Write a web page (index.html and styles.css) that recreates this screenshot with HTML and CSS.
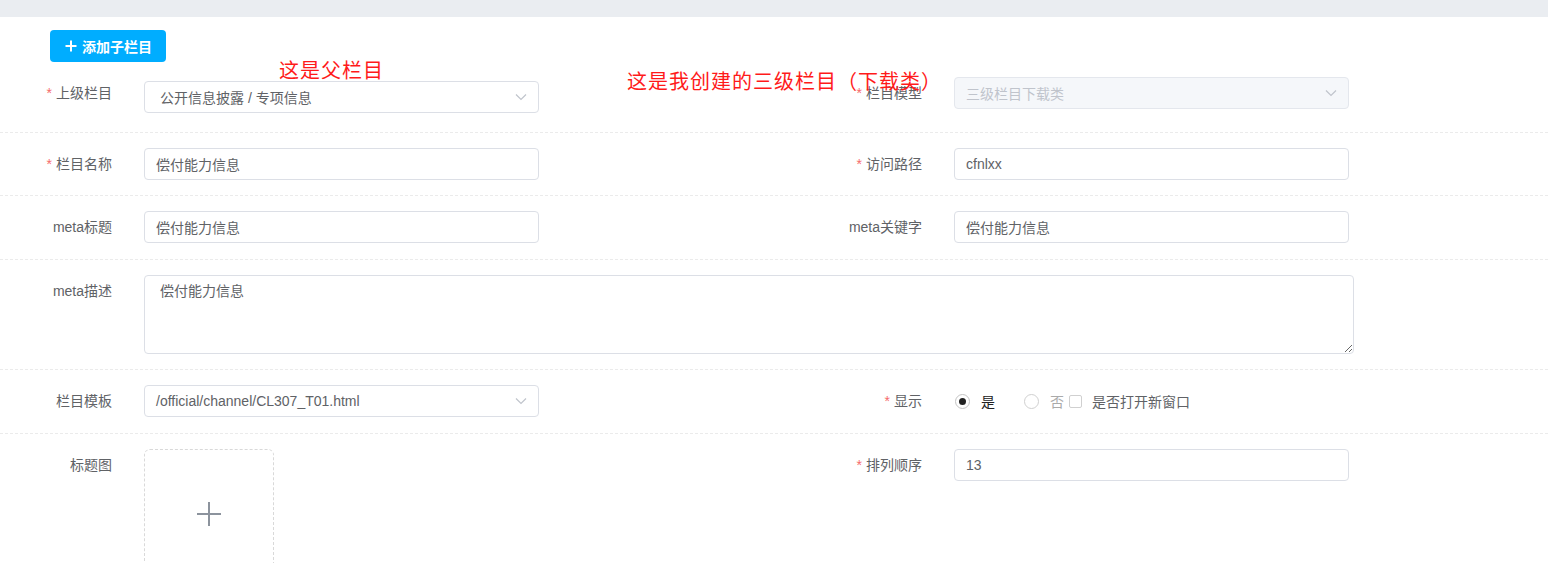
FILE: index.html
```html
<!DOCTYPE html>
<html lang="zh-CN">
<head>
<meta charset="utf-8">
<title>栏目编辑</title>
<link rel="stylesheet" href="styles.css">
</head>
<body>
<div class="topbar"></div>
<div class="page">
  <div class="toolbar">
    <button class="btn-primary" type="button">
      <svg class="btn-icon" width="12" height="12" viewBox="0 0 12 12"><path d="M6 0.5V11.5M0.5 6H11.5" stroke="#fff" stroke-width="2" fill="none"/></svg>
      <span>添加子栏目</span>
    </button>
  </div>

  <div class="annot annot-parent">这是父栏目</div>
  <div class="annot annot-self">这是我创建的三级栏目（下载类）</div>

  <form class="form">
    <div class="row row-first">
      <div class="field">
        <label class="label req">上级栏目</label>
        <div class="control select select-parent">
          <span class="value">公开信息披露 / 专项信息</span>
          <svg class="chev" width="12" height="8" viewBox="0 0 12 8"><path d="M1 1.5L6 6.5L11 1.5" stroke="#c0c4cc" stroke-width="1.2" fill="none"/></svg>
        </div>
      </div>
      <div class="field">
        <label class="label req">栏目模型</label>
        <div class="control select is-disabled">
          <span class="value">三级栏目下载类</span>
          <svg class="chev" width="12" height="8" viewBox="0 0 12 8"><path d="M1 1.5L6 6.5L11 1.5" stroke="#c0c4cc" stroke-width="1.2" fill="none"/></svg>
        </div>
      </div>
    </div>

    <div class="row">
      <div class="field">
        <label class="label req">栏目名称</label>
        <input class="control input" type="text" value="偿付能力信息">
      </div>
      <div class="field">
        <label class="label req">访问路径</label>
        <input class="control input" type="text" value="cfnlxx">
      </div>
    </div>

    <div class="row">
      <div class="field">
        <label class="label">meta标题</label>
        <input class="control input" type="text" value="偿付能力信息">
      </div>
      <div class="field">
        <label class="label">meta关键字</label>
        <input class="control input" type="text" value="偿付能力信息">
      </div>
    </div>

    <div class="row">
      <div class="field field-wide">
        <label class="label">meta描述</label>
        <textarea class="textarea">偿付能力信息</textarea>
      </div>
    </div>

    <div class="row">
      <div class="field">
        <label class="label">栏目模板</label>
        <div class="control select select-tpl">
          <span class="value">/official/channel/CL307_T01.html</span>
          <svg class="chev" width="12" height="8" viewBox="0 0 12 8"><path d="M1 1.5L6 6.5L11 1.5" stroke="#c0c4cc" stroke-width="1.2" fill="none"/></svg>
        </div>
      </div>
      <div class="field">
        <label class="label req">显示</label>
        <div class="radios">
          <span class="radio is-checked"></span>
          <span class="radio-text is-checked">是</span>
          <span class="radio"></span>
          <span class="radio-text">否</span>
          <span class="checkbox"></span>
          <span class="check-text">是否打开新窗口</span>
        </div>
      </div>
    </div>

    <div class="row row-last">
      <div class="field">
        <label class="label">标题图</label>
        <div class="uploader">
          <svg width="26" height="26" viewBox="0 0 26 26"><path d="M13 1V25M1 13H25" stroke="#8c939d" stroke-width="2" fill="none"/></svg>
        </div>
      </div>
      <div class="field">
        <label class="label req">排列顺序</label>
        <input class="control input" type="text" value="13">
      </div>
    </div>
  </form>
</div>
</body>
</html>
```

FILE: styles.css
```css
* { box-sizing: border-box; }

html, body {
  margin: 0;
  padding: 0;
  background: #fff;
  overflow: hidden;
}

body {
  font-family: "Liberation Sans", "Noto Sans CJK SC", sans-serif;
  font-size: 14px;
  color: #606266;
}

.topbar {
  height: 17px;
  background: #eaedf1;
}

.page {
  position: relative;
}

.toolbar {
  padding: 13px 0 0 50px;
}

.btn-primary {
  display: inline-flex;
  align-items: center;
  gap: 5px;
  height: 32px;
  width: 116px;
  padding: 0 0 0 15px;
  border: none;
  border-radius: 4px;
  background: #00adff;
  color: #fff;
  font-family: "Liberation Sans", "Noto Sans CJK SC", sans-serif;
  font-size: 14px;
  font-weight: bold;
  cursor: pointer;
}

.btn-icon { flex: none; }

.annot {
  position: absolute;
  font-family: "Noto Sans CJK SC", sans-serif;
  font-size: 20px;
  line-height: 20px;
  letter-spacing: 1px;
  color: #ff1a1a;
  white-space: nowrap;
}

.annot-parent {
  left: 279px;
  top: 43px;
}

.annot-self {
  left: 627px;
  top: 54px;
}

.row {
  display: flex;
  padding: 15px 0 15.5px 34px;
  border-bottom: 1px dashed #ebebeb;
}

.row-first {
  padding-top: 15px;
  padding-bottom: 18.5px;
}

.row-last {
  border-bottom: none;
}

.field {
  display: flex;
  align-items: flex-start;
  width: 810px;
  flex: none;
}

.field + .field {
  width: auto;
  flex: 1 1 auto;
}

.field-wide {
  width: auto;
}

.label {
  width: 110px;
  flex: none;
  padding-right: 32px;
  text-align: right;
  line-height: 32px;
  font-size: 14px;
  color: #606266;
  white-space: nowrap;
}

.label.req::before {
  content: "*";
  color: #f56c6c;
  margin-right: 4px;
}

.control {
  width: 395px;
  height: 32px;
  border: 1px solid #dcdfe6;
  border-radius: 4px;
  background: #fff;
  font-family: "Liberation Sans", "Noto Sans CJK SC", sans-serif;
  font-size: 14px;
  color: #606266;
}

.input {
  padding: 0 11px;
  outline: none;
}

.select {
  display: flex;
  align-items: center;
  justify-content: space-between;
  padding: 0 11px 0 11px;
}

.select-parent {
  margin-top: 4px;
  padding-left: 15px;
}

.select-tpl {
  padding-left: 11px;
}

.select .chev {
  flex: none;
}

.is-disabled {
  background: #f5f7fa;
  border-color: #e4e7ed;
  color: #c0c4cc;
}

.textarea {
  display: block;
  width: 1210px;
  height: 79px;
  padding: 5px 15px;
  border: 1px solid #dcdfe6;
  border-radius: 4px;
  font-family: "Liberation Sans", "Noto Sans CJK SC", sans-serif;
  font-size: 14px;
  line-height: 1.5;
  color: #606266;
  resize: vertical;
  outline: none;
}

.radios {
  display: flex;
  align-items: center;
  height: 32px;
  padding-left: 1px;
}

.radio {
  width: 15px;
  height: 15px;
  border: 1px solid #c4c4c4;
  border-radius: 50%;
  background: #fff;
  display: flex;
  align-items: center;
  justify-content: center;
  flex: none;
}

.radio:not(.is-checked) {
  border-color: #d0d0d0;
}

.radio.is-checked::after {
  content: "";
  width: 7px;
  height: 7px;
  border-radius: 50%;
  background: #222;
}

.radio-text {
  margin: 0 29px 0 11px;
  color: #aaa;
}

.radio-text.is-checked {
  color: #222;
}

.radio-text:not(.is-checked) {
  margin-right: 5px;
}

.checkbox {
  width: 13px;
  height: 13px;
  border: 1px solid #d0d0d0;
  border-radius: 2px;
  background: #fff;
  flex: none;
}

.check-text {
  margin-left: 10px;
  color: #606266;
}

.uploader {
  width: 130px;
  height: 130px;
  border: 1px dashed #d9d9d9;
  border-radius: 6px;
  display: flex;
  align-items: center;
  justify-content: center;
}
```
